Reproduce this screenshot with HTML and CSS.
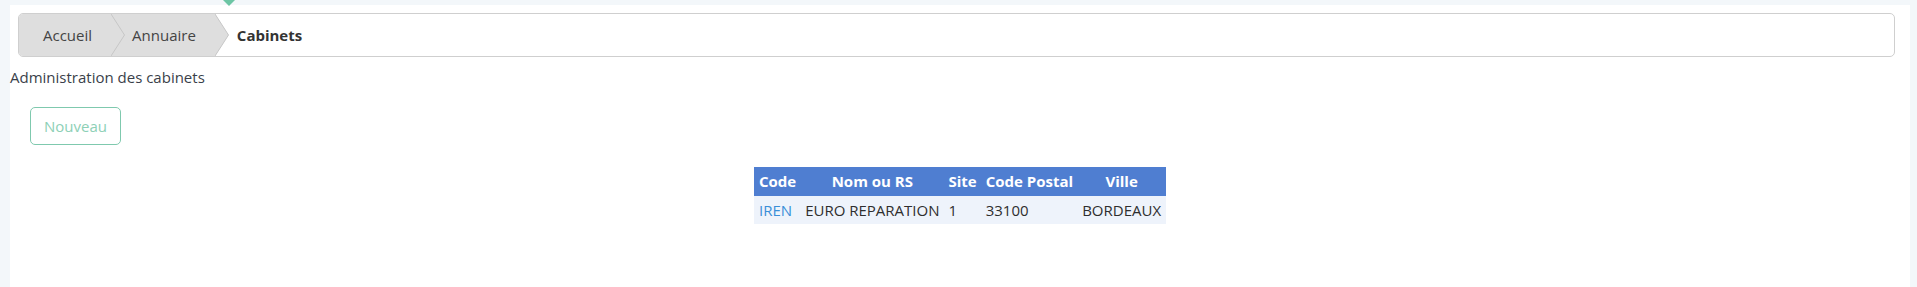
FILE: index.html
```html
<!DOCTYPE html>
<html lang="fr">
<head>
<meta charset="utf-8">
<title>Cabinets</title>
<link rel="stylesheet" href="styles.css">
</head>
<body>
<div class="topbar"><span class="marker"></span></div>
<main class="page">
  <nav class="breadcrumb">
    <a class="crumb crumb-first" href="#">Accueil</a>
    <svg class="sep" width="14" height="42" viewBox="0 0 14 42" aria-hidden="true">
      <rect x="0" y="0" width="14" height="42" fill="#dedede"/>
      <polyline points="0,0 13.5,21 0,42" fill="none" stroke="#c6c6c6" stroke-width="1"/>
    </svg>
    <a class="crumb crumb-mid" href="#">Annuaire</a>
    <svg class="sep" width="14" height="42" viewBox="0 0 14 42" aria-hidden="true">
      <rect x="0" y="0" width="14" height="42" fill="#ffffff"/>
      <polygon points="0,0 13.5,21 0,42" fill="#dedede"/>
      <polyline points="0,0 13.5,21 0,42" fill="none" stroke="#c6c6c6" stroke-width="1"/>
    </svg>
    <span class="crumb crumb-current">Cabinets</span>
  </nav>
  <p class="subtitle">Administration des cabinets</p>
  <div class="actions">
    <button class="btn-new" type="button">Nouveau</button>
  </div>
  <table class="grid">
    <thead>
      <tr><th>Code</th><th>Nom ou RS</th><th>Site</th><th>Code Postal</th><th>Ville</th></tr>
    </thead>
    <tbody>
      <tr><td><a href="#">IREN</a></td><td>EURO REPARATION</td><td>1</td><td>33100</td><td>BORDEAUX</td></tr>
    </tbody>
  </table>
</main>
</body>
</html>
```

FILE: styles.css
```css
html, body {
  margin: 0;
  padding: 0;
}
body {
  background: #f3f7fa;
  font-family: "Open Sans", "Noto Sans", sans-serif;
  font-size: 15px;
  color: #333;
}
.topbar {
  height: 5px;
  position: relative;
}
.marker {
  position: absolute;
  left: 223px;
  top: 0;
  width: 0;
  height: 0;
  border-left: 6px solid transparent;
  border-right: 6px solid transparent;
  border-top: 6px solid #6cc5a4;
}
.page {
  background: #fff;
  margin: 0 7px 0 10px;
  min-height: 282px;
  padding-top: 8px;
  display: flex;
  flex-direction: column;
}
.breadcrumb {
  display: flex;
  align-items: stretch;
  height: 42px;
  margin: 0 15px 0 8px;
  border: 1px solid #cfcfcf;
  border-radius: 5px;
  overflow: hidden;
  background: #fff;
}
.crumb {
  display: flex;
  align-items: center;
  text-decoration: none;
  color: #444;
}
.crumb-first {
  background: #dedede;
  padding: 0 19px 0 24px;
}
.crumb-mid {
  background: #dedede;
  padding: 0 19px 0 7px;
}
.crumb-current {
  font-weight: 700;
  color: #333;
  padding-left: 8px;
}
.sep {
  display: block;
  flex: none;
}
.subtitle {
  margin: 0;
  padding-top: 10px;
  line-height: 20px;
  color: #3a3f4a;
}
.actions {
  padding: 20px 0 0 20px;
}
.btn-new {
  font-family: inherit;
  font-size: 15px;
  height: 38px;
  padding: 0 13px;
  background: #fff;
  color: #8dd0b6;
  border: 1px solid #7fc9ae;
  border-radius: 5px;
}
.grid {
  margin: 22px auto 0;
  border-collapse: collapse;
  font-size: 15px;
}
.grid th {
  background: #4f7ed1;
  color: #fff;
  font-weight: 700;
  padding: 4px 4.5px 5px;
  line-height: 20px;
  text-align: center;
  white-space: nowrap;
}
.grid td {
  background: #eef3fb;
  padding: 4px 4.5px;
  line-height: 20px;
  text-align: left;
  white-space: nowrap;
  color: #2e2e2e;
}
.grid td a {
  color: #3a8fd8;
  text-decoration: none;
}
```
